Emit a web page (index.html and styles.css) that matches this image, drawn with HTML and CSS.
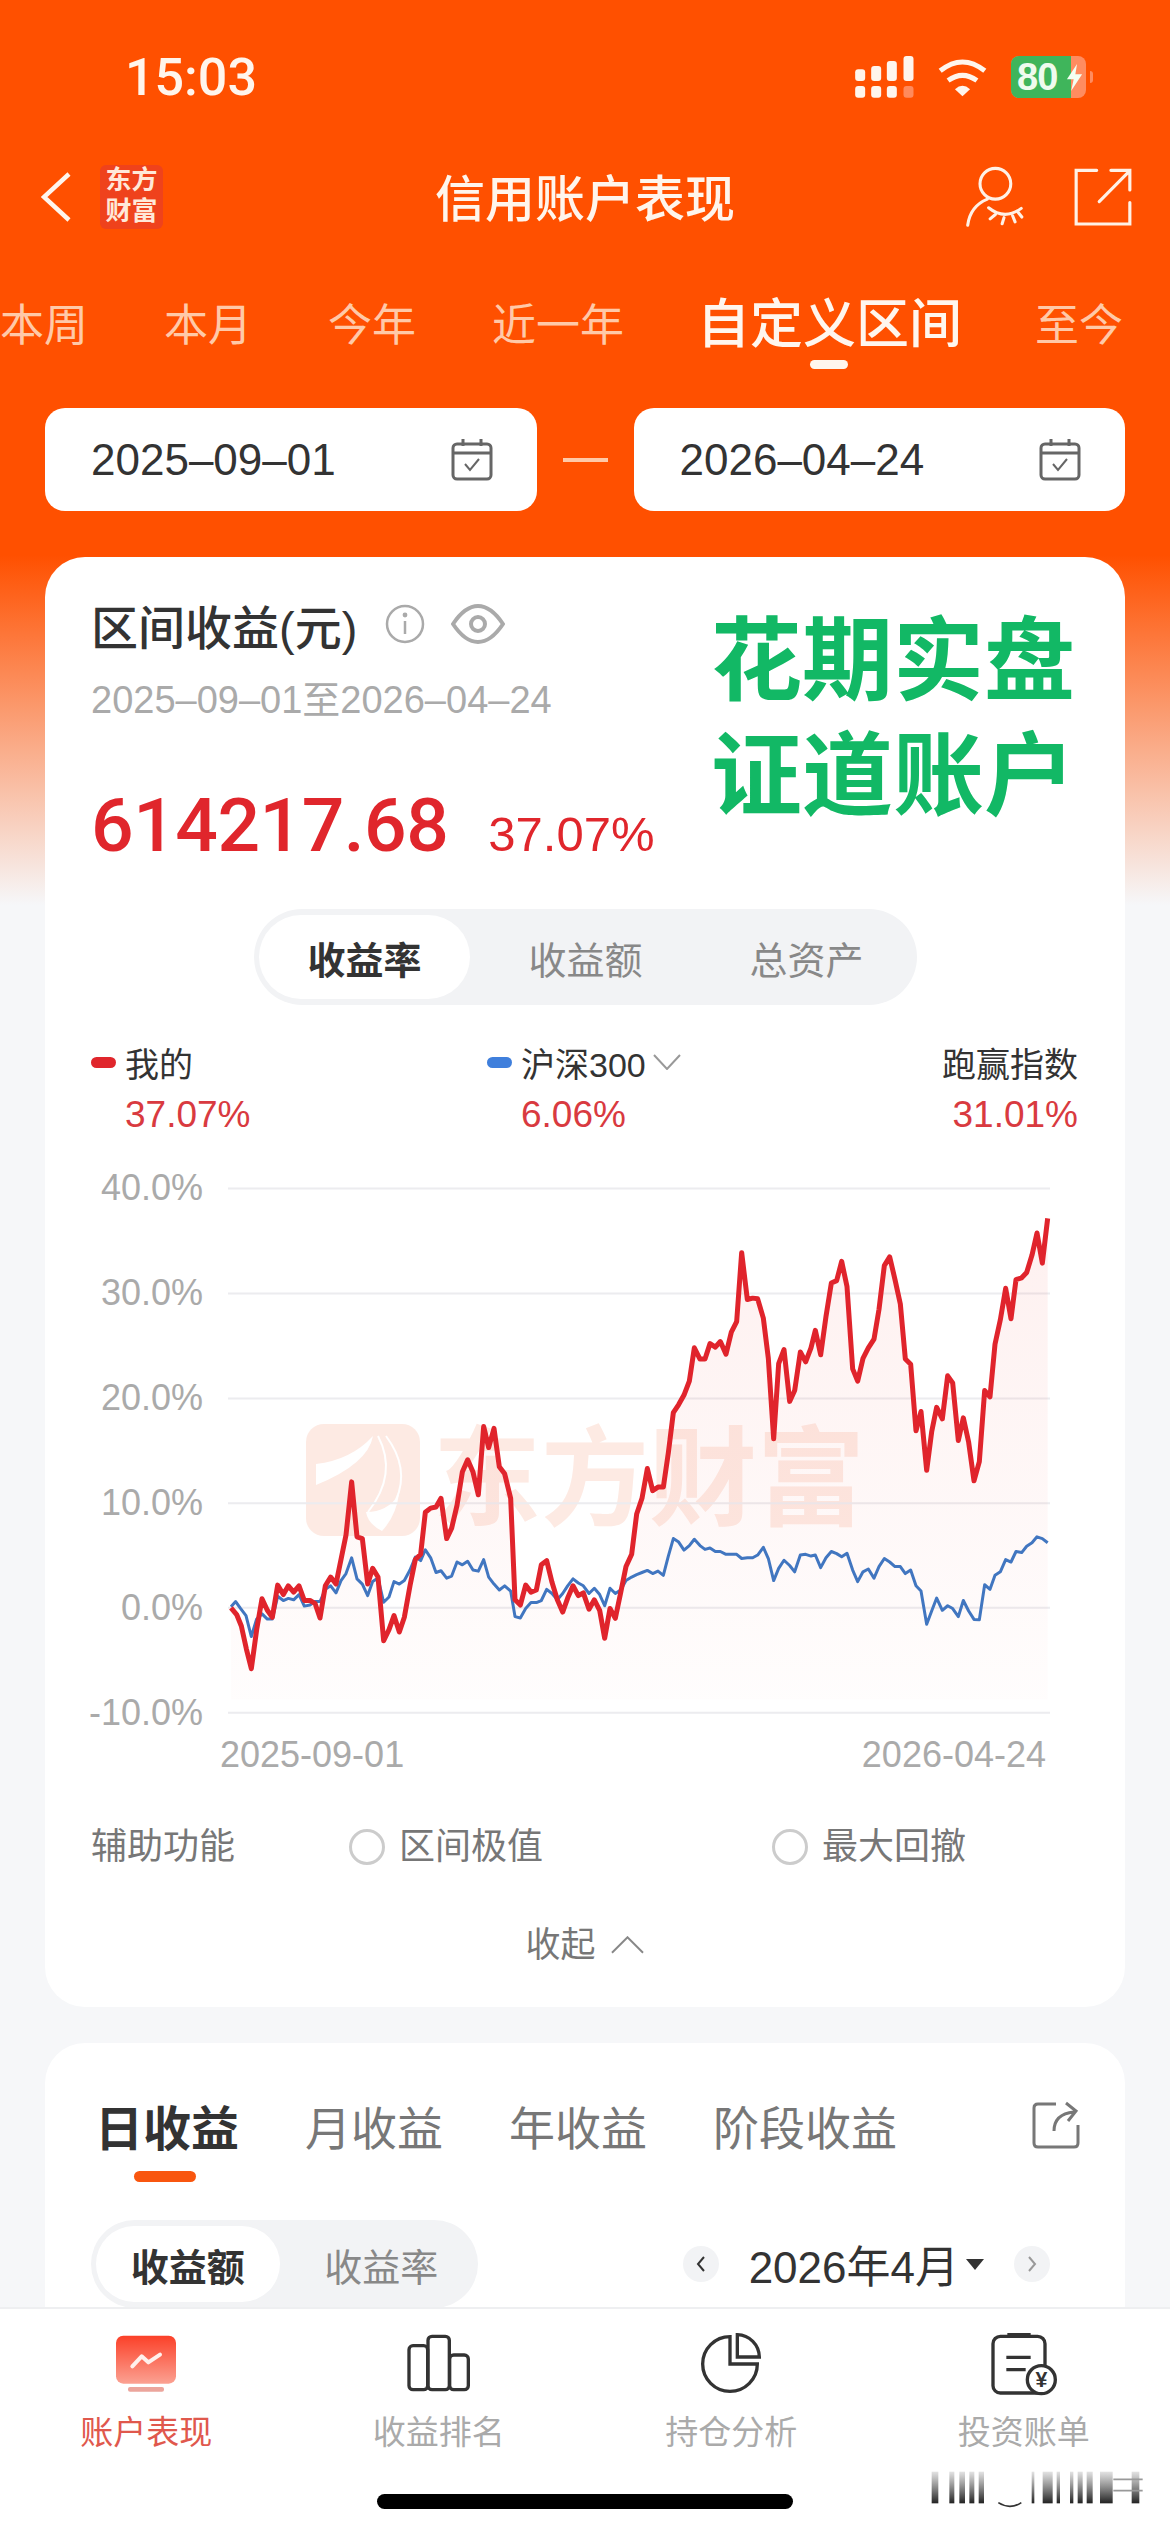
FILE: index.html
```html
<!DOCTYPE html>
<html lang="zh-CN">
<head>
  <meta charset="UTF-8" />
  <title>信用账户表现</title>
  <link rel="stylesheet" href="styles.css">
</head>
<body>
<div class="page">

  <!-- status bar -->
  <div class="statusbar">
    <span class="time">15:03</span>
    <div class="status-icons">
      <svg class="signal" viewBox="48 50 176 126">
        <rect x="48" y="90" width="30" height="35" rx="9"/><rect x="96" y="80" width="30" height="45" rx="9"/>
        <rect x="143" y="65" width="30" height="60" rx="9"/><rect x="193" y="50" width="30" height="75" rx="9"/>
        <rect x="48" y="140" width="30" height="35" rx="9"/><rect x="96" y="140" width="30" height="35" rx="9"/>
        <rect x="143" y="140" width="30" height="35" rx="9"/><rect class="dim" x="193" y="140" width="30" height="35" rx="9"/>
      </svg>
      <svg class="wifi" viewBox="285 50 160 122">
        <path d="M297 92 Q365 38 433 92" /><path d="M321 122 Q365 90 409 122" />
        <path class="fill" d="M342 148 Q365 128 388 148 L365 170 Z" />
      </svg>
      <div class="battery">
        <div class="battery-level"><span>80</span></div>
        <svg class="bolt" viewBox="0 0 20 32"><path d="M13 0 L1 18 H9 L6 32 L19 12 H11 Z"/></svg>
        <i class="battery-nub"></i>
      </div>
    </div>
  </div>

  <!-- nav -->
  <div class="nav">
    <div class="nav-left">
      <svg class="back" viewBox="0 0 30 50"><polyline points="28,2 3,25 28,48"/></svg>
      <div class="logo">东方<br>财富</div>
    </div>
    <div class="nav-title">信用账户表现</div>
    <div class="nav-right">
      <svg class="nav-icon user-eye" viewBox="360 375 195 200">
        <circle cx="462" cy="432" r="50"/>
        <path d="M372 567 Q380 505 436 482"/>
        <path d="M440 510 Q492 552 546 512"/>
        <path d="M462 532 L445 546 M490 542 L484 562 M518 536 L526 556 M535 524 L548 540"/>
      </svg>
      <svg class="nav-icon" viewBox="695 380 190 185">
        <path d="M770 388 H705 V558 H875 V490"/>
        <path d="M778 487 L872 392 M815 388 H875 V450"/>
      </svg>
    </div>
  </div>

  <div class="tabs">
    <span class="tab">本周</span>
    <span class="tab">本月</span>
    <span class="tab">今年</span>
    <span class="tab">近一年</span>
    <span class="tab active">自定义区间</span>
    <span class="tab">至今</span>
  </div>

  <div class="dates">
    <div class="date-box">
      <span>2025–09–01</span>
      <svg class="cal" viewBox="0 0 42 42">
        <rect x="2" y="5" width="38" height="35" rx="4"/><path d="M2 14 H40 M12 0 V7 M30 0 V7"/>
        <path class="thin" d="M14 25 L19 31 L28 20"/>
      </svg>
    </div>
    <div class="date-dash"></div>
    <div class="date-box">
      <span>2026–04–24</span>
      <svg class="cal" viewBox="0 0 42 42">
        <rect x="2" y="5" width="38" height="35" rx="4"/><path d="M2 14 H40 M12 0 V7 M30 0 V7"/>
        <path class="thin" d="M14 25 L19 31 L28 20"/>
      </svg>
    </div>
  </div>

  <!-- main card -->
  <div class="card">
    <div class="sticker">花期实盘<br>证道账户</div>

    <div class="card-title">
      <span>区间收益(元)</span>
      <svg class="info" viewBox="0 0 40 40">
        <circle cx="20" cy="20" r="18"/><path d="M20 17 V30"/><circle class="dot" cx="20" cy="11" r="2.4"/>
      </svg>
      <svg class="eye" viewBox="0 0 54 40">
        <path d="M2 20 Q14 2 27 2 Q40 2 52 20 Q40 38 27 38 Q14 38 2 20 Z"/><circle cx="27" cy="20" r="7"/>
      </svg>
    </div>
    <div class="card-sub">2025–09–01至2026–04–24</div>
    <div class="amount-row">
      <span class="amount">614217.68</span>
      <span class="amount-pct">37.07%</span>
    </div>

    <div class="seg seg-three">
      <span class="seg-item active">收益率</span>
      <span class="seg-item">收益额</span>
      <span class="seg-item">总资产</span>
    </div>

    <div class="legend">
      <div>
        <div class="legend-name"><i class="mark mark-red"></i>我的</div>
        <div class="legend-val">37.07%</div>
      </div>
      <div>
        <div class="legend-name"><i class="mark mark-blue"></i>沪深300
          <svg class="legend-arrow" viewBox="0 0 28 16"><polyline points="1,1 14,15 27,1"/></svg>
        </div>
        <div class="legend-val">6.06%</div>
      </div>
      <div class="legend-end">
        <div class="legend-name">跑赢指数</div>
        <div class="legend-val">31.01%</div>
      </div>
    </div>

    <div class="chart">
      <div class="y-axis">
        <span>40.0%</span><span>30.0%</span><span>20.0%</span><span>10.0%</span><span>0.0%</span><span>-10.0%</span>
      </div>
      <div class="plot">
        <div class="watermark">
          <svg class="wm-logo" viewBox="0 0 114 112">
            <rect class="wm-bg" width="114" height="112" rx="18"/>
            <path class="wm-cut" d="M10 40 Q45 36 67 12 Q62 40 10 61 Z"/>
            <path class="wm-cut" d="M60 88 Q62 100 76 107 Q90 92 93 70 Q82 88 60 88 Z"/>
            <path class="wm-arc" d="M72 12 Q92 50 62 88 M80 12 Q104 44 90 76"/>
          </svg>
          <span>东方财富</span>
        </div>
        <svg class="lines" viewBox="84 29 2481 1643" preserveAspectRatio="none">
          <defs>
            <linearGradient id="areaFade" x1="0" y1="0" x2="0" y2="1">
              <stop offset="0" stop-color="#f0463c" stop-opacity="0.08"/>
              <stop offset="1" stop-color="#f0463c" stop-opacity="0.012"/>
            </linearGradient>
          </defs>
          <path class="grid" d="M84 105 H2550 M84 405 H2550 M84 705 H2550 M84 1004 H2550 M84 1303 H2550 M84 1603 H2550"/>
          <polygon class="area" points="93,1565 93,1303 110,1322 124,1355 139,1420 154,1477 170,1365 186,1277 202,1310 217,1330 233,1238 250,1265 265,1240 281,1258 297,1240 313,1282 330,1282 345,1290 360,1332 376,1240 392,1215 408,1235 423,1165 438,1095 455,943 471,1100 487,1105 503,1235 518,1190 534,1215 551,1397 567,1365 582,1325 598,1372 613,1330 630,1240 646,1165 662,1150 676,1030 692,1018 708,1015 723,990 740,1105 755,1075 771,1010 787,915 803,880 819,915 835,980 851,785 866,845 882,790 898,900 914,920 932,990 945,1280 961,1295 977,1238 993,1258 1009,1252 1024,1180 1040,1168 1056,1230 1072,1280 1088,1315 1103,1275 1119,1240 1135,1268 1150,1260 1167,1307 1183,1280 1199,1310 1214,1390 1230,1305 1246,1333 1262,1260 1278,1185 1295,1150 1310,1035 1326,990 1342,905 1358,968 1374,958 1390,958 1405,860 1420,745 1436,722 1452,695 1468,655 1483,560 1500,592 1515,592 1530,548 1546,558 1561,542 1578,578 1594,515 1610,485 1625,288 1642,422 1658,418 1673,420 1690,475 1705,590 1721,820 1736,605 1752,565 1769,713 1784,682 1801,572 1817,600 1833,560 1846,510 1862,580 1878,470 1894,375 1910,368 1925,313 1941,385 1958,620 1973,655 1989,590 2005,560 2022,535 2037,450 2053,325 2069,300 2085,365 2101,435 2116,592 2132,607 2148,797 2163,742 2180,910 2195,800 2210,730 2227,763 2243,640 2258,660 2275,825 2290,760 2306,830 2322,940 2338,885 2354,682 2370,700 2385,550 2401,480 2417,390 2433,477 2448,365 2465,360 2480,345 2496,295 2511,232 2527,318 2543,190 2543,1565"/>
          <polyline class="line-blue" points="93,1300 107,1285 122,1305 138,1325 154,1385 170,1335 186,1320 202,1335 217,1335 233,1270 250,1282 265,1276 281,1280 297,1265 313,1298 330,1295 345,1285 360,1285 376,1250 392,1240 408,1260 423,1225 438,1205 455,1160 471,1220 487,1235 503,1268 518,1228 534,1218 551,1287 567,1272 582,1228 598,1235 613,1225 630,1195 646,1158 662,1168 676,1137 692,1160 708,1202 723,1197 740,1218 755,1212 771,1172 787,1180 803,1170 819,1195 835,1198 851,1165 866,1215 882,1235 898,1252 914,1240 932,1255 945,1328 961,1332 977,1305 993,1288 1009,1288 1024,1282 1040,1250 1056,1262 1072,1280 1088,1262 1103,1240 1119,1220 1135,1232 1150,1240 1167,1262 1183,1247 1199,1265 1214,1297 1230,1247 1246,1262 1262,1252 1278,1225 1295,1215 1310,1208 1326,1202 1342,1196 1358,1205 1374,1198 1390,1210 1405,1155 1420,1105 1436,1115 1452,1138 1468,1125 1483,1107 1500,1125 1515,1136 1530,1132 1546,1142 1561,1142 1578,1150 1594,1150 1610,1150 1625,1162 1642,1160 1658,1160 1673,1152 1690,1130 1705,1162 1721,1225 1736,1190 1752,1167 1769,1182 1784,1200 1801,1152 1817,1150 1833,1155 1846,1152 1862,1188 1878,1160 1894,1142 1910,1148 1925,1157 1941,1147 1958,1195 1973,1228 1989,1200 2005,1192 2022,1218 2037,1185 2053,1162 2069,1172 2085,1185 2101,1185 2116,1205 2132,1195 2148,1240 2163,1255 2180,1350 2195,1312 2210,1275 2227,1310 2243,1297 2258,1305 2275,1328 2290,1282 2306,1312 2322,1336 2338,1337 2354,1237 2370,1250 2385,1210 2401,1200 2417,1165 2433,1172 2448,1142 2465,1145 2480,1127 2496,1117 2511,1100 2527,1105 2543,1117"/>
          <polyline class="line-red" points="93,1303 110,1322 124,1355 139,1420 154,1477 170,1365 186,1277 202,1310 217,1330 233,1238 250,1265 265,1240 281,1258 297,1240 313,1282 330,1282 345,1290 360,1332 376,1240 392,1215 408,1235 423,1165 438,1095 455,943 471,1100 487,1105 503,1235 518,1190 534,1215 551,1397 567,1365 582,1325 598,1372 613,1330 630,1240 646,1165 662,1150 676,1030 692,1018 708,1015 723,990 740,1105 755,1075 771,1010 787,915 803,880 819,915 835,980 851,785 866,845 882,790 898,900 914,920 932,990 945,1280 961,1295 977,1238 993,1258 1009,1252 1024,1180 1040,1168 1056,1230 1072,1280 1088,1315 1103,1275 1119,1240 1135,1268 1150,1260 1167,1307 1183,1280 1199,1310 1214,1390 1230,1305 1246,1333 1262,1260 1278,1185 1295,1150 1310,1035 1326,990 1342,905 1358,968 1374,958 1390,958 1405,860 1420,745 1436,722 1452,695 1468,655 1483,560 1500,592 1515,592 1530,548 1546,558 1561,542 1578,578 1594,515 1610,485 1625,288 1642,422 1658,418 1673,420 1690,475 1705,590 1721,820 1736,605 1752,565 1769,713 1784,682 1801,572 1817,600 1833,560 1846,510 1862,580 1878,470 1894,375 1910,368 1925,313 1941,385 1958,620 1973,655 1989,590 2005,560 2022,535 2037,450 2053,325 2069,300 2085,365 2101,435 2116,592 2132,607 2148,797 2163,742 2180,910 2195,800 2210,730 2227,763 2243,640 2258,660 2275,825 2290,760 2306,830 2322,940 2338,885 2354,682 2370,700 2385,550 2401,480 2417,390 2433,477 2448,365 2465,360 2480,345 2496,295 2511,232 2527,318 2543,190"/>
        </svg>
      </div>
    </div>
    <div class="x-axis"><span>2025-09-01</span><span>2026-04-24</span></div>

    <div class="aux">
      <span>辅助功能</span>
      <span class="aux-opt"><i class="radio"></i>区间极值</span>
      <span class="aux-opt"><i class="radio"></i>最大回撤</span>
    </div>

    <div class="collapse">
      <span>收起</span>
      <svg viewBox="0 0 34 18"><polyline points="1,17 17,1 33,17"/></svg>
    </div>
  </div>

  <!-- second card, runs under the bottom bar -->
  <div class="card card-two">
    <div class="period-tabs">
      <span class="period active">日收益</span>
      <span class="period">月收益</span>
      <span class="period">年收益</span>
      <span class="period">阶段收益</span>
      <svg class="share" viewBox="0 0 48 48">
        <path d="M24 3 H6 Q2 3 2 7 V42 Q2 46 6 46 H42 Q46 46 46 42 V24"/>
        <path d="M22 30 Q22 13 42 11 M34 2 L44 10 L36 20"/>
      </svg>
    </div>
    <div class="period-row">
      <div class="seg seg-two">
        <span class="seg-item active">收益额</span>
        <span class="seg-item">收益率</span>
      </div>
      <div class="month-nav">
        <span class="month-btn"><svg viewBox="0 0 10 18"><polyline points="8,2 2,9 8,16"/></svg></span>
        <span class="month-text">2026年4月</span>
        <i class="caret"></i>
        <span class="month-btn light"><svg viewBox="0 0 10 18"><polyline points="2,2 8,9 2,16"/></svg></span>
      </div>
    </div>
  </div>

  <!-- bottom bar -->
  <div class="bottombar">
    <div class="bar-item active">
      <svg viewBox="150 30 216 180">
        <defs>
          <linearGradient id="tabRed" x1="0" y1="0" x2="0" y2="1">
            <stop offset="0" stop-color="#fb4028"/>
            <stop offset="1" stop-color="#fba192"/>
          </linearGradient>
        </defs>
        <rect x="168" y="38" width="180" height="144" rx="22" fill="url(#tabRed)"/>
        <rect x="204" y="192" width="108" height="14" rx="6" fill="#eca59c"/>
        <polyline class="zig" points="217,130 245,100 265,118 300,95"/>
      </svg>
      <span>账户表现</span>
    </div>
    <div class="bar-item">
      <svg viewBox="1030 30 216 180">
        <rect x="1048" y="68" width="56" height="132" rx="12"/>
        <rect x="1105" y="40" width="64" height="160" rx="12"/>
        <rect x="1170" y="96" width="56" height="104" rx="12"/>
      </svg>
      <span>收益排名</span>
    </div>
    <div class="bar-item">
      <svg viewBox="135 30 216 180">
        <path d="M240 41 A82 82 0 1 0 322 123 H240 Z"/>
        <path d="M262 35 A68 68 0 0 1 328 102 H262 Z"/>
      </svg>
      <span>持仓分析</span>
    </div>
    <div class="bar-item">
      <svg viewBox="1017 30 216 180">
        <rect x="1032" y="40" width="156" height="170" rx="22"/>
        <path class="clip" d="M1075 36 H1145"/>
        <path d="M1072 103 H1145 M1072 140 H1130"/>
        <circle class="coin" cx="1177" cy="170" r="42"/>
        <text class="yen" x="1177" y="192" text-anchor="middle">¥</text>
      </svg>
      <span>投资账单</span>
    </div>
    <div class="home-indicator"></div>
    <svg class="smudge" viewBox="0 0 810 246">
      <defs>
        <linearGradient id="smudgeFade" x1="0" y1="0" x2="0" y2="1">
          <stop offset="0" stop-color="#444" stop-opacity="0.15"/>
          <stop offset="1" stop-color="#222"/>
        </linearGradient>
      </defs>
      <g fill="url(#smudgeFade)">
        <rect x="95" y="65" width="20" height="95"/><rect x="148" y="65" width="15" height="95"/>
        <rect x="178" y="65" width="17" height="95"/><rect x="208" y="65" width="15" height="95"/>
        <rect x="236" y="65" width="16" height="95"/><rect x="395" y="65" width="8" height="95"/>
        <rect x="428" y="65" width="30" height="95"/><rect x="470" y="65" width="10" height="95"/>
        <rect x="510" y="65" width="10" height="95"/><rect x="533" y="65" width="15" height="95"/>
        <rect x="560" y="65" width="18" height="95"/><rect x="600" y="65" width="38" height="95"/>
        <rect x="695" y="65" width="23" height="95"/>
      </g>
      <path class="smudge-u" d="M295 158 Q330 180 364 158"/>
      <path class="smudge-dash" d="M640 88 H728 M640 122 H728"/>
    </svg>
  </div>

</div>
</body>
</html>
```
FILE: styles.css
```css
* {
  box-sizing: border-box;
}
html, body {
  margin: 0;
  padding: 0;
}
body {
  font-family: "Liberation Sans", "Noto Sans CJK SC", sans-serif;
  color: #333;
}
.page {
  position: relative;
  width: 1170px;
  height: 2532px;
  overflow: hidden;
  background: linear-gradient(#ff5000 555px, #f6f7f9 905px);
}

/* status bar */
.statusbar {
  height: 154px;
  display: flex;
  align-items: center;
  justify-content: space-between;
  padding: 0 84px 0 125px;
}
.time {
  font-family: Roboto, sans-serif;
  font-size: 52px;
  font-weight: 500;
  color: #fff5ec;
}
.status-icons {
  display: flex;
  align-items: center;
  gap: 22px;
}
.signal {
  width: 59px;
  height: 42px;
  fill: #fff5ec;
}
.signal .dim {
  fill: #ff8a5c;
}
.wifi {
  width: 53px;
  height: 40px;
  fill: none;
  stroke: #fff5ec;
  stroke-width: 15;
}
.wifi .fill {
  fill: #fff5ec;
  stroke: none;
}
.battery {
  position: relative;
  width: 75px;
  height: 42px;
  border-radius: 8px;
  background: #ff8c60;
}
.battery-level {
  width: 60px;
  height: 42px;
  border-radius: 8px 0 0 8px;
  background: #3fb55b;
  padding-left: 6px;
  font-size: 38px;
  font-weight: bold;
  line-height: 42px;
  letter-spacing: -1px;
  color: #eefbee;
}
.bolt {
  position: absolute;
  left: 55px;
  top: 8px;
  width: 17px;
  height: 27px;
  fill: #f4fff2;
}
.battery-nub {
  position: absolute;
  right: -7px;
  top: 15px;
  width: 3px;
  height: 12px;
  border-radius: 0 3px 3px 0;
  background: #ff8c60;
}

/* nav */
.nav {
  height: 86px;
  display: grid;
  grid-template-columns: 1fr auto 1fr;
  align-items: center;
}
.nav-left {
  display: flex;
  align-items: center;
  gap: 29px;
  padding-left: 41px;
}
.back {
  width: 30px;
  height: 50px;
  fill: none;
  stroke: #fff5ec;
  stroke-width: 4.5;
}
.logo {
  width: 63px;
  height: 64px;
  background: #ef421c;
  border-radius: 6px;
  font-size: 26px;
  font-weight: bold;
  line-height: 31px;
  text-align: center;
  color: #ffe8d8;
}
.nav-title {
  padding-bottom: 5px;
  font-size: 50px;
  font-weight: 500;
  color: #fff5ec;
}
.nav-right {
  display: flex;
  justify-content: flex-end;
  gap: 49px;
  padding-right: 37px;
}
.nav-icon {
  width: 60px;
  height: 62px;
  fill: none;
  stroke: #fff1e6;
  stroke-width: 10;
  stroke-linecap: round;
}

/* range tabs */
.tabs {
  height: 100px;
  margin-top: 30px;
  display: flex;
  align-items: center;
  gap: 76px;
  white-space: nowrap;
}
.tab {
  padding-top: 4px;
  font-size: 44px;
  color: #ffc9a8;
}
.tab.active {
  position: relative;
  margin: 0 -3px;
  padding-top: 0;
  font-size: 53px;
  font-weight: 500;
  color: #fff6ee;
}
.tab.active::after {
  content: "";
  position: absolute;
  left: 113px;
  bottom: -11px;
  width: 38px;
  height: 9px;
  border-radius: 5px;
  background: #fff6ee;
}

/* date inputs */
.dates {
  margin-top: 38px;
  padding: 0 45px;
  display: flex;
  align-items: center;
}
.date-box {
  flex: 1;
  height: 103px;
  display: flex;
  align-items: center;
  justify-content: space-between;
  padding: 0 44px 0 46px;
  background: #fff;
  border-radius: 20px;
  font-size: 44px;
  color: #333;
}
.cal {
  width: 42px;
  height: 42px;
  fill: none;
  stroke: #666;
  stroke-width: 3;
}
.cal .thin {
  stroke-width: 2;
}
.date-dash {
  width: 45px;
  height: 4px;
  margin: 0 26px;
  background: #ffc9a8;
}

/* cards */
.card {
  position: relative;
  margin: 46px 45px 0;
  padding: 37px 47px 37px 46px;
  background: #fff;
  border-radius: 40px;
}
.sticker {
  position: absolute;
  left: 666px;
  top: 47px;
  font-size: 91px;
  font-weight: bold;
  line-height: 115px;
  white-space: nowrap;
  color: #12b865;
}
.card-title {
  display: flex;
  align-items: center;
  height: 60px;
  font-size: 47px;
  font-weight: 500;
  color: #333;
}
.info {
  width: 40px;
  height: 40px;
  margin-left: 28px;
  fill: none;
  stroke: #aaa;
  stroke-width: 2.5;
}
.info .dot {
  fill: #aaa;
  stroke: none;
}
.eye {
  width: 54px;
  height: 40px;
  margin-left: 26px;
  fill: none;
  stroke: #aaa;
  stroke-width: 4;
}
.card-sub {
  margin-top: 21px;
  font-size: 38px;
  line-height: 50px;
  color: #aaa;
}
.amount-row {
  margin-top: 55px;
  display: flex;
  align-items: baseline;
  gap: 40px;
  line-height: 90px;
  color: #e0262c;
}
.amount {
  font-family: Roboto, sans-serif;
  font-size: 75px;
  font-weight: 500;
  letter-spacing: -0.5px;
}
.amount-pct {
  font-size: 49px;
}

/* segmented control */
.seg {
  display: grid;
  height: 96px;
  border-radius: 48px;
  background: #f2f3f5;
  font-size: 38px;
  color: #888;
  text-align: center;
}
.seg-three {
  grid-template-columns: repeat(3, 1fr);
  width: 663px;
  margin: 30px 0 0 163px;
}
.seg-item {
  display: flex;
  align-items: center;
  justify-content: center;
}
.seg-item.active {
  margin: 6px 5px;
  border-radius: 42px;
  background: #fff;
  font-weight: bold;
  color: #333;
}

/* legend */
.legend {
  margin-top: 32px;
  display: grid;
  grid-template-columns: 396px 1fr auto;
}
.legend-name {
  display: flex;
  align-items: center;
  height: 50px;
  font-size: 34px;
  color: #333;
}
.legend-val {
  margin-top: 3px;
  padding-left: 34px;
  font-size: 37px;
  line-height: 50px;
  color: #d93a40;
}
.legend-end .legend-name {
  justify-content: flex-end;
}
.legend-end .legend-val {
  padding-left: 0;
  text-align: right;
}
.mark {
  width: 25px;
  height: 11px;
  margin-right: 9px;
  border-radius: 6px;
}
.mark-red {
  background: #e0262c;
}
.mark-blue {
  background: #3f7fdc;
}
.legend-arrow {
  width: 28px;
  height: 16px;
  margin-left: 7px;
  fill: none;
  stroke: #999;
  stroke-width: 2;
}

/* chart */
.chart {
  margin-top: 22px;
  display: flex;
  gap: 25px;
  height: 575px;
}
.y-axis {
  width: 112px;
  display: flex;
  flex-direction: column;
  justify-content: space-between;
  align-items: flex-end;
  padding: 6px 0 4px;
  font-size: 36px;
  line-height: 40px;
  color: #aaa;
}
.plot {
  position: relative;
  width: 827px;
}
.watermark {
  position: absolute;
  left: 78px;
  top: 262px;
  display: flex;
  align-items: center;
  gap: 13px;
  font-size: 108px;
  font-weight: bold;
  line-height: 112px;
  white-space: nowrap;
  color: #fdeae3;
}
.wm-logo {
  width: 114px;
  height: 112px;
}
.wm-bg {
  fill: #fdeae3;
}
.wm-cut {
  fill: #fff;
}
.wm-arc {
  fill: none;
  stroke: #fff;
  stroke-width: 2;
}
.lines {
  position: absolute;
  left: 0;
  top: 0;
  width: 827px;
  height: 575px;
  fill: none;
}
.grid {
  stroke: #ececef;
  stroke-width: 2px;
  vector-effect: non-scaling-stroke;
}
.area {
  fill: url(#areaFade);
}
.line-red {
  stroke: #e0242c;
  stroke-width: 5px;
  stroke-linejoin: round;
  vector-effect: non-scaling-stroke;
}
.line-blue {
  stroke: #4176c0;
  stroke-width: 3px;
  stroke-linejoin: round;
  vector-effect: non-scaling-stroke;
}
.x-axis {
  display: flex;
  justify-content: space-between;
  padding: 0 32px 0 129px;
  font-size: 36px;
  line-height: 36px;
  color: #aaa;
}

/* aux options */
.aux {
  margin-top: 49px;
  display: grid;
  grid-template-columns: 258px 423px auto;
  font-size: 36px;
  line-height: 50px;
  color: #777;
}
.aux-opt {
  display: flex;
  align-items: center;
  gap: 14px;
}
.radio {
  width: 36px;
  height: 36px;
  border: 3px solid #ccc;
  border-radius: 50%;
}
.collapse {
  margin-top: 48px;
  display: flex;
  align-items: center;
  justify-content: center;
  gap: 15px;
  font-size: 35px;
  line-height: 50px;
  color: #777;
}
.collapse svg {
  width: 33px;
  height: 18px;
  fill: none;
  stroke: #888;
  stroke-width: 2;
}

/* second card */
.card-two {
  margin-top: 36px;
  padding: 52px 45px 100px 50px;
}
.period-tabs {
  display: flex;
  align-items: center;
  gap: 66px;
  height: 60px;
  font-size: 46px;
  color: #777;
}
.period.active {
  position: relative;
  font-size: 48px;
  font-weight: bold;
  color: #333;
}
.period.active::after {
  content: "";
  position: absolute;
  left: 39px;
  bottom: -22px;
  width: 62px;
  height: 11px;
  border-radius: 6px;
  background: #f9560f;
}
.share {
  width: 48px;
  height: 48px;
  margin-left: auto;
  fill: none;
  stroke: #777;
  stroke-width: 3;
}
.period-row {
  margin-top: 65px;
  display: flex;
  align-items: center;
  justify-content: space-between;
  padding-right: 30px;
}
.seg-two {
  grid-template-columns: repeat(2, 1fr);
  width: 387px;
  height: 88px;
  margin-left: -4px;
  border-radius: 44px;
}
.month-nav {
  display: flex;
  align-items: center;
  font-size: 44px;
  color: #333;
}
.month-btn {
  width: 36px;
  height: 36px;
  display: flex;
  align-items: center;
  justify-content: center;
  border-radius: 50%;
  background: #f2f3f5;
}
.month-btn svg {
  width: 10px;
  height: 18px;
  fill: none;
  stroke: #333;
  stroke-width: 2;
}
.month-btn.light svg {
  stroke: #999;
}
.month-text {
  margin-left: 30px;
}
.caret {
  width: 0;
  height: 0;
  margin: 0 30px 0 7px;
  border-left: 9px solid transparent;
  border-right: 9px solid transparent;
  border-top: 11px solid #333;
}

/* bottom bar */
.bottombar {
  position: absolute;
  left: 0;
  right: 0;
  bottom: 0;
  height: 225px;
  display: flex;
  padding-top: 24px;
  background: #fff;
  border-top: 2px solid #eeeff1;
}
.bar-item {
  flex: 1;
  display: flex;
  flex-direction: column;
  align-items: center;
  font-size: 33px;
  color: #aaa;
}
.bar-item svg {
  width: 72px;
  height: 60px;
  overflow: visible;
  fill: none;
  stroke: #333;
  stroke-width: 10;
}
.bar-item span {
  margin-top: 15px;
  line-height: 50px;
}
.bar-item.active {
  color: #e0584d;
}
.bar-item.active svg {
  stroke: none;
}
.bar-item .zig {
  fill: none;
  stroke: #fff0ec;
  stroke-width: 12;
  stroke-linecap: round;
  stroke-linejoin: round;
}
.bar-item .clip {
  stroke-width: 12;
}
.bar-item .coin {
  fill: #fff;
}
.bar-item .yen {
  stroke: none;
  fill: #333;
  font-size: 64px;
  font-weight: bold;
}
.home-indicator {
  position: absolute;
  left: 377px;
  bottom: 23px;
  width: 416px;
  height: 15px;
  border-radius: 8px;
  background: #000;
}
.smudge {
  position: absolute;
  right: 0;
  bottom: 0;
  width: 270px;
  height: 82px;
}
.smudge-u {
  fill: none;
  stroke: #333;
  stroke-width: 5;
}
.smudge-dash {
  fill: none;
  stroke: #999;
  stroke-width: 5;
}
```
